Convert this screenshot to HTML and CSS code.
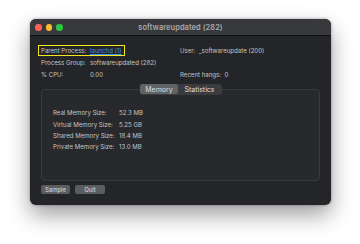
FILE: index.html
```html
<!DOCTYPE html>
<html>
<head>
<meta charset="utf-8">
<link rel="stylesheet" href="styles.css">
</head>
<body>
<div class="window">
  <div class="titlebar">
    <div class="lights">
      <span class="light red"></span>
      <span class="light yellow"></span>
      <span class="light green"></span>
    </div>
    <div class="title">softwareupdated (282)</div>
  </div>
  <div class="content">
    <div class="info">
      <div class="pp"><span class="lbl">Parent Process:</span><a class="link">launchd (1)</a></div>
      <div class="right">User:&nbsp; _softwareupdate (200)</div>
      <div class="lbl">Process Group:</div>
      <div>softwareupdated (282)</div>
      <div></div>
      <div class="lbl">% CPU:</div>
      <div>0.00</div>
      <div class="right">Recent hangs:&nbsp; 0</div>
    </div>
    <div class="group">
      <div class="tabs">
        <span class="tab active">Memory</span>
        <span class="tab">Statistics</span>
      </div>
      <div class="mem">
        <div>Real Memory Size:</div><div>52.3 MB</div>
        <div>Virtual Memory Size:</div><div>5.25 GB</div>
        <div>Shared Memory Size:</div><div>18.4 MB</div>
        <div>Private Memory Size:</div><div>13.0 MB</div>
      </div>
    </div>
    <div class="buttons">
      <span class="btn">Sample</span>
      <span class="btn quit">Quit</span>
    </div>
  </div>
</div>
</body>
</html>
```
FILE: styles.css
```css
html, body {
  margin: 0;
  padding: 0;
  background: #ffffff;
}
body {
  width: 360px;
  height: 244px;
  overflow: hidden;
  padding: 19px 0 0 30px;
  box-sizing: border-box;
  font-family: Inter, "Liberation Sans", sans-serif;
}
.window {
  width: 301px;
  height: 186px;
  border-radius: 6px;
  background: #232528;
  overflow: hidden;
  box-shadow: 0 10px 22px rgba(0,0,0,0.38), 0 0 3px rgba(0,0,0,0.35);
  display: flex;
  flex-direction: column;
}
.titlebar {
  height: 16px;
  background: #38393c;
  border-bottom: 1px solid #111214;
  position: relative;
  display: flex;
  align-items: center;
  justify-content: center;
  flex-shrink: 0;
}
.lights {
  position: absolute;
  left: 5px;
  top: 5px;
  display: flex;
  gap: 4px;
}
.light {
  width: 6.5px;
  height: 6.5px;
  border-radius: 50%;
  display: block;
}
.red { background: #fe5f57; }
.yellow { background: #febc2e; }
.green { background: #28c840; }
.title {
  font-size: 7.4px;
  font-weight: 600;
  color: #a9aaac;
  letter-spacing: 0.1px;
}
.content {
  padding: 8px 11px 0 11px;
  color: #c4c5c6;
  font-size: 6.1px;
}
.info {
  display: grid;
  grid-template-columns: 49px 90px auto;
  grid-auto-rows: 12px;
  align-items: center;
}
.pp {
  grid-column: 1 / span 2;
  justify-self: start;
  margin-left: -3px;
  padding: 0 2px 0 2px;
  border: 1.5px solid #f4e81a;
  height: 9px;
  display: flex;
  align-items: center;
  width: 81px;
}
.pp .lbl {
  width: 49px;
  flex-shrink: 0;
}
.link {
  color: #3d8ff0;
  text-decoration: underline;
}
.group {
  margin-top: 9px;
  height: 92px;
  box-sizing: border-box;
  border: 1px solid #383a3d;
  border-radius: 4px;
  background: #27292c;
  display: flex;
  flex-direction: column;
}
.tabs {
  align-self: center;
  margin-top: -6.5px;
  height: 11px;
  background: #3a3b3e;
  border-radius: 3px;
  display: flex;
  padding: 0.5px;
  box-sizing: border-box;
  font-size: 7px;
  color: #dedfe0;
}
.tab {
  display: flex;
  align-items: center;
  justify-content: center;
  border-radius: 2.5px;
}
.tab.active {
  width: 38px;
  background: #616266;
}
.tab:not(.active) {
  width: 43px;
}
.mem {
  margin-top: 12.5px;
  margin-left: 11px;
  display: grid;
  grid-template-columns: 66px auto;
  grid-auto-rows: 11.4px;
  align-items: center;
}
.buttons {
  margin-top: 4px;
  display: flex;
  gap: 5px;
}
.btn {
  width: 29px;
  height: 9px;
  border-radius: 2px;
  background: #5b5c5f;
  color: #dcdcdd;
  font-size: 6px;
  display: flex;
  align-items: center;
  justify-content: center;
}
.btn.quit {
  width: 30px;
}
```
